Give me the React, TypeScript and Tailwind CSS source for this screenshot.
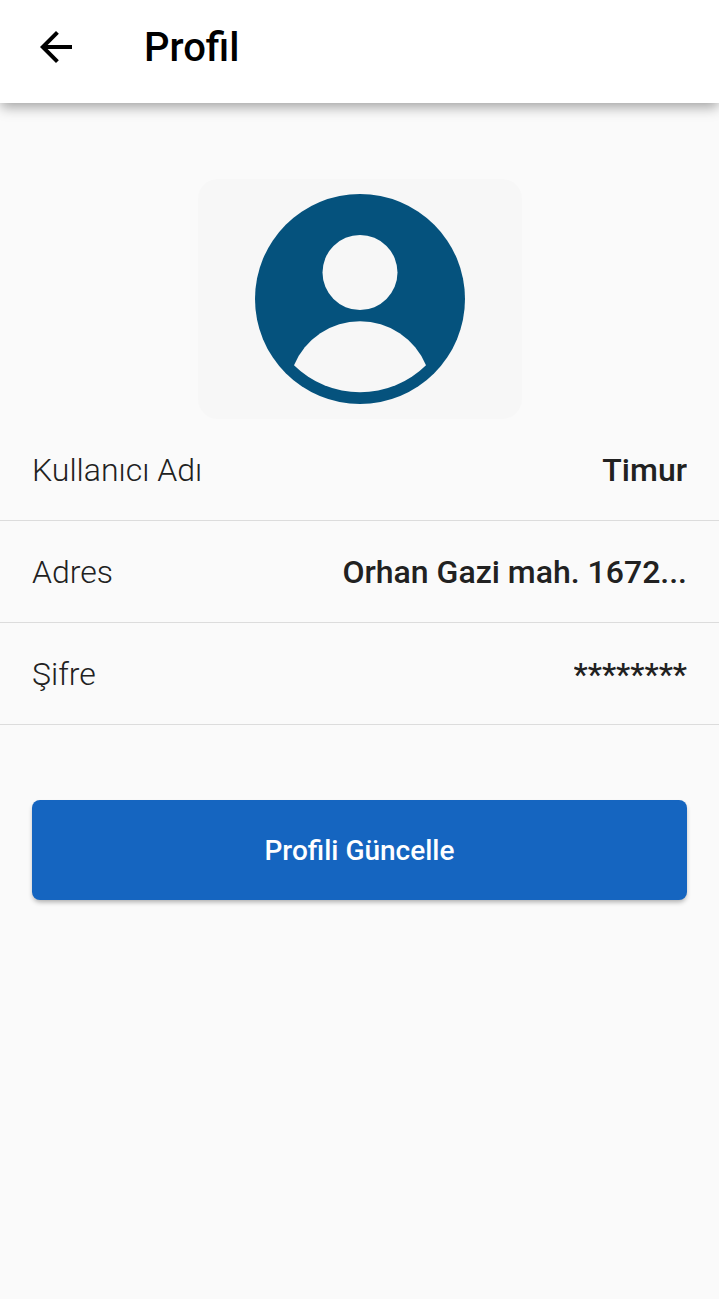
import React from "react";

type Field = { label: string; value: string };

const fields: Field[] = [
  { label: "Kullanıcı Adı", value: "Timur" },
  { label: "Adres", value: "Orhan Gazi mah. 1672..." },
  { label: "Şifre", value: "********" },
];

function BackIcon() {
  return (
    <svg viewBox="4 4 16 16" className="size-8" fill="currentColor" aria-hidden="true">
      <path d="M20 11H7.83l5.59-5.59L12 4l-8 8 8 8 1.41-1.41L7.83 13H20v-2z" />
    </svg>
  );
}

function Avatar() {
  return (
    <svg viewBox="0 0 210 210" className="size-[210px]" role="img" aria-label="Profil resmi">
      <circle cx="105" cy="105" r="105" fill="#05527d" />
      <circle cx="105" cy="78.5" r="37.5" fill="#f7f7f7" />
      <path d="M39 171.3 A71.5 71.5 0 0 1 171 171.3 A94 94 0 0 1 39 171.3Z" fill="#f7f7f7" />
    </svg>
  );
}

export default function App() {
  return (
    <div className="min-h-screen bg-[#fafafa] font-[Roboto,sans-serif] text-[#212121]">
      <header className="flex h-[103px] items-center bg-white px-10 pb-[9px] text-black shadow-[0_5px_12px_-1px_rgba(0,0,0,0.36)]">
        <button type="button" aria-label="Geri" className="mr-[72px]">
          <BackIcon />
        </button>
        <h1 className="text-[40px] leading-[47px] font-medium">Profil</h1>
      </header>
      <main>
        <div className="flex justify-center pt-[76px]">
          <div className="rounded-[20px] bg-[#f7f7f7] px-[57px] py-[15px]">
            <Avatar />
          </div>
        </div>
        <dl>
          {fields.map((field) => (
            <div
              key={field.label}
              className="flex h-[102px] items-center justify-between gap-4 border-b border-[#dcdcdc] px-8 text-[32px] leading-10"
            >
              <dt className="shrink-0 font-light">{field.label}</dt>
              <dd className="truncate font-medium">{field.value}</dd>
            </div>
          ))}
        </dl>
        <div className="px-8 pt-[75px]">
          <button
            type="button"
            className="h-[100px] w-full rounded-lg bg-[#1565c0] text-[28px] leading-[33px] font-medium text-white shadow-[0_3px_5px_-1px_rgba(0,0,0,0.32)]"
          >
            Profili Güncelle
          </button>
        </div>
      </main>
    </div>
  );
}
